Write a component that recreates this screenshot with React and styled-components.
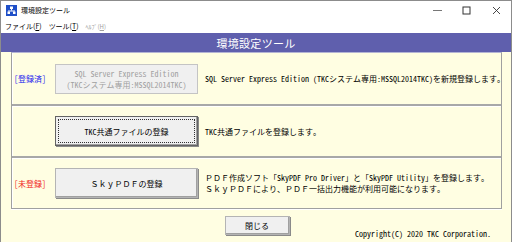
import styled, { createGlobalStyle } from "styled-components";

const gothic = `"Noto Sans Mono CJK JP", "Noto Sans CJK JP", monospace`;
const ui = `"Noto Sans CJK JP", "Noto Sans", sans-serif`;

const GlobalStyle = createGlobalStyle`
  html, body {
    margin: 0;
    padding: 0;
    background: #ffffff;
  }
  * {
    box-sizing: border-box;
  }
`;

const rows = [
  {
    status: "[登録済]",
    statusColor: "#1c1cf0",
    label: ["SQL Server Express Edition", "(TKCシステム専用:MSSQL2014TKC)"],
    disabled: true,
    desc: ["SQL Server Express Edition (TKCシステム専用:MSSQL2014TKC)を新規登録します。"],
  },
  {
    status: "",
    label: ["TKC共通ファイルの登録"],
    focused: true,
    desc: ["TKC共通ファイルを登録します。"],
  },
  {
    status: "[未登録]",
    statusColor: "#f01c1c",
    label: ["ＳｋｙＰＤＦの登録"],
    desc: [
      "ＰＤＦ作成ソフト「SkyPDF Pro Driver」と「SkyPDF Utility」を登録します。",
      "ＳｋｙＰＤＦにより、ＰＤＦ一括出力機能が利用可能になります。",
    ],
  },
];

export default function App() {
  return (
    <>
      <GlobalStyle />
      <Window>
        <TitleBar>
          <AppIcon viewBox="0 0 11 11">
            <rect x="0" y="0" width="11" height="11" fill="#1f4fc8" />
            <rect x="4" y="1.5" width="3" height="2.5" fill="#fff" />
            <rect x="5" y="4" width="1" height="1.5" fill="#fff" />
            <rect x="2" y="5.5" width="7" height="1" fill="#fff" />
            <rect x="1.5" y="6.5" width="2.5" height="2.5" fill="#fff" />
            <rect x="7" y="6.5" width="2.5" height="2.5" fill="#fff" />
          </AppIcon>
          <WindowTitle>環境設定ツール</WindowTitle>
          <Controls>
            <ControlButton>
              <svg width="9" height="9" viewBox="0 0 9 9">
                <line x1="0" y1="4.5" x2="9" y2="4.5" stroke="#777" strokeWidth="1" />
              </svg>
            </ControlButton>
            <ControlButton>
              <svg width="9" height="9" viewBox="0 0 9 9">
                <rect x="1" y="1" width="7" height="7" fill="none" stroke="#333" strokeWidth="1" />
              </svg>
            </ControlButton>
            <ControlButton>
              <svg width="9" height="9" viewBox="0 0 9 9">
                <path d="M1 1 L8 8 M8 1 L1 8" stroke="#333" strokeWidth="0.9" />
              </svg>
            </ControlButton>
          </Controls>
        </TitleBar>

        <MenuBar>
          <MenuItem>ファイル(<u>F</u>)</MenuItem>
          <MenuItem>ツール(<u>T</u>)</MenuItem>
          <MenuItem $muted>ﾍﾙﾌﾟ(<u>H</u>)</MenuItem>
        </MenuBar>

        <HeaderBand>環境設定ツール</HeaderBand>

        <Body>
          <Panel>
            {rows.map((row, i) => (
              <Row key={i} $first={i === 0}>
                <Status $color={row.statusColor}>{row.status}</Status>
                <ActionButton $disabled={row.disabled} $focused={row.focused}>
                  {row.focused ? (
                    <FocusRect>{row.label[0]}</FocusRect>
                  ) : (
                    row.label.map((l, j) => <span key={j}>{l}</span>)
                  )}
                </ActionButton>
                <Description>
                  {row.desc.map((d, j) => (
                    <span key={j}>{d}</span>
                  ))}
                </Description>
              </Row>
            ))}
          </Panel>

          <Footer>
            <span />
            <CloseButton>閉じる</CloseButton>
            <Copyright>Copyright(C) 2020 TKC Corporation.</Copyright>
          </Footer>
        </Body>
      </Window>
    </>
  );
}

const Window = styled.div`
  width: 512px;
  height: 242px;
  display: flex;
  flex-direction: column;
  border: 1px solid #8c8c8c;
  border-bottom: none;
  background: #fffee2;
  overflow: hidden;
`;

const TitleBar = styled.div`
  height: 18px;
  flex: none;
  display: flex;
  align-items: center;
  background: #ffffff;
  padding-left: 5px;
`;

const AppIcon = styled.svg`
  width: 11px;
  height: 11px;
  flex: none;
`;

const WindowTitle = styled.div`
  margin-left: 4px;
  font-family: ${ui};
  font-size: 7px;
  color: #000;
  flex: 1;
`;

const Controls = styled.div`
  display: flex;
  height: 100%;
`;

const ControlButton = styled.div`
  width: 29.5px;
  height: 100%;
  display: flex;
  align-items: center;
  justify-content: center;
`;

const MenuBar = styled.div`
  height: 14px;
  flex: none;
  display: flex;
  align-items: center;
  gap: 7px;
  padding-left: 4px;
  background: #ffffff;
`;

const MenuItem = styled.div`
  font-family: ${ui};
  font-size: ${(p) => (p.$muted ? "6px" : "7px")};
  color: ${(p) => (p.$muted ? "#a0a0a0" : "#000")};
  u {
    text-underline-offset: 1px;
  }
`;

const HeaderBand = styled.div`
  height: 19px;
  flex: none;
  display: flex;
  align-items: center;
  justify-content: center;
  background: #5f5fad;
  color: #ffffff;
  font-family: ${ui};
  font-size: 11px;
  letter-spacing: 0.3px;
`;

const Body = styled.div`
  flex: 1;
  display: flex;
  flex-direction: column;
  padding: 0 9px 0 10px;
`;

const Panel = styled.div`
  display: flex;
  flex-direction: column;
  border: 1px solid #a0a0a0;
  border-top-color: #b4b4d4;
  box-shadow: inset 1px 0 0 #ffffff, 0 1px 0 #ffffff;
`;

const Row = styled.div`
  height: ${(p) => (p.$first ? "51px" : "52px")};
  display: flex;
  align-items: center;
  border-top: ${(p) => (p.$first ? "none" : "2px solid")};
  border-top-color: #a8a8a8;
  box-shadow: ${(p) => (p.$first ? "none" : "inset 0 1px 0 #ffffff")};
`;

const Status = styled.div`
  width: 43px;
  flex: none;
  padding-left: 2px;
  font-family: ${gothic};
  font-size: 8px;
  color: ${(p) => p.$color || "#000"};
`;

const ActionButton = styled.div`
  width: 143px;
  height: 30px;
  flex: none;
  display: flex;
  flex-direction: column;
  align-items: center;
  justify-content: center;
  background: #f0f0f0;
  border: 1px solid ${(p) => (p.$focused ? "#646464" : p.$disabled ? "#c4c4c4" : "#b4b4b4")};
  box-shadow: ${(p) =>
    p.$disabled ? "none" : "inset -1px -1px 0 #a0a0a0, 1px 1px 0 #8a8a8a"};
  font-family: ${gothic};
  font-size: 8px;
  line-height: 11px;
  color: ${(p) => (p.$disabled ? "#a0a0a0" : "#000")};
  padding: ${(p) => (p.$focused ? "2px" : "0")};
`;

const FocusRect = styled.div`
  width: 100%;
  height: 100%;
  display: flex;
  align-items: center;
  justify-content: center;
  border: 1px dotted #303030;
`;

const Description = styled.div`
  margin-left: 7px;
  display: flex;
  flex-direction: column;
  font-family: ${gothic};
  font-size: 8px;
  line-height: 11px;
  color: #000;
  white-space: nowrap;
`;

const Footer = styled.div`
  flex: 1;
  display: grid;
  grid-template-columns: 1fr auto 1fr;
  align-items: start;
  padding: 7px 11px 0 12px;
`;

const CloseButton = styled.div`
  width: 65px;
  height: 19px;
  display: flex;
  align-items: center;
  justify-content: center;
  background: #f0f0f0;
  border: 1px solid #b4b4b4;
  box-shadow: inset -1px -1px 0 #a0a0a0, 1px 1px 0 #8a8a8a;
  font-family: ${gothic};
  font-size: 8px;
  color: #000;
`;

const Copyright = styled.div`
  justify-self: end;
  align-self: end;
  margin-bottom: 3px;
  font-family: ${gothic};
  font-size: 8px;
  color: #000;
  white-space: nowrap;
`;
